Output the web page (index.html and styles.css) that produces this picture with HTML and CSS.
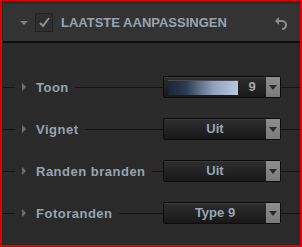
FILE: index.html
```html
<!DOCTYPE html>
<html lang="nl">
<head>
    <meta charset="UTF-8">
    <link rel="stylesheet" href="styles.css">
</head>
<body>
<div class="panel">
    <!-- Panel header -->
    <div class="header">
        <span class="caret-down"></span>
        <span class="check">
            <svg width="13" height="13" viewBox="0 0 13 13"><path d="M2 7 L5 10 L11 2" fill="none" stroke="#8f8f8f" stroke-width="2"/></svg>
        </span>
        <span class="title">LAATSTE AANPASSINGEN</span>
        <svg class="undo" width="14" height="14" viewBox="0 0 14 14"><path d="M5 1 L1 5 L5 9 Z" fill="#8a8a8a"/><path d="M3 5 H8 A4 4 0 0 1 8 13" fill="none" stroke="#8a8a8a" stroke-width="2.2"/></svg>
    </div>

    <!-- Rows -->
    <div class="rows">
        <div class="row">
            <span class="label"><span class="caret"></span>Toon</span>
            <div class="select">
                <div class="value tone"><span class="gradient"></span><span class="num">9</span></div>
                <span class="arrow"></span>
            </div>
        </div>
        <div class="row">
            <span class="label"><span class="caret"></span>Vignet</span>
            <div class="select">
                <div class="value">Uit</div>
                <span class="arrow"></span>
            </div>
        </div>
        <div class="row">
            <span class="label"><span class="caret"></span>Randen branden</span>
            <div class="select">
                <div class="value">Uit</div>
                <span class="arrow"></span>
            </div>
        </div>
        <div class="row">
            <span class="label"><span class="caret"></span>Fotoranden</span>
            <div class="select">
                <div class="value">Type 9</div>
                <span class="arrow"></span>
            </div>
        </div>
    </div>
</div>
</body>
</html>
```
FILE: styles.css
```css
html, body {
    margin: 0;
    padding: 0;
}

body {
    font-family: "Liberation Sans", Arial, sans-serif;
    font-weight: bold;
}

.panel {
    width: 302px;
    height: 247px;
    box-sizing: border-box;
    border: 2px solid #e00000;
    border-top-width: 1px;
    background-color: #2a2a2a;
}

.header {
    height: 37px;
    margin-left: 1px;
    background-color: #333333;
    border-top: 3px solid #2c2c2c;
    border-bottom: 2px solid #0d0d0d;
    display: flex;
    align-items: center;
    color: #96a4b2;
}

.caret-down {
    width: 0;
    height: 0;
    border-left: 4px solid transparent;
    border-right: 4px solid transparent;
    border-top: 4px solid #7d7d7d;
    margin-left: 17px;
    margin-right: 7px;
}

.check {
    width: 16px;
    height: 17px;
    background-color: #2e2e2e;
    border: 1px solid #232323;
    display: flex;
    align-items: center;
    justify-content: center;
    margin-right: 8px;
}

.title {
    font-size: 13px;
}

.undo {
    margin-left: auto;
    margin-right: 12px;
}

.rows {
    padding-top: 23px;
}

.row {
    height: 42px;
    display: flex;
    align-items: center;
    background: linear-gradient(#141414, #141414) no-repeat 1px 50% / 100% 1px;
}

.label {
    display: flex;
    align-items: center;
    margin-left: 13px;
    padding: 0 6px;
    background-color: #2a2a2a;
    color: #96a4b2;
    font-size: 13px;
    letter-spacing: 0.5px;
}

.caret {
    width: 0;
    height: 0;
    border-top: 4px solid transparent;
    border-bottom: 4px solid transparent;
    border-left: 4px solid #6e6e6e;
    margin-left: 1px;
    margin-right: 10px;
}

.select {
    margin-left: auto;
    margin-right: 19px;
    width: 118px;
    height: 22px;
    box-sizing: border-box;
    border: 1px solid #0c0c0c;
    border-radius: 2px;
    display: flex;
    background: linear-gradient(#2e2e2e, #181818);
    box-shadow: inset 0 1px 0 #3a3a3a;
}

.value {
    flex: 1;
    text-align: center;
    line-height: 20px;
    font-size: 13px;
    color: #97a6b4;
}

.value.tone {
    display: flex;
    align-items: center;
    padding-left: 4px;
}

.gradient {
    width: 70px;
    height: 14px;
    background: linear-gradient(to right, #1b2535, #2b3a52 25%, #8fa2bf 65%, #b9c8de);
    border-top: 1px solid #4a4a4a;
}

.num {
    flex: 1;
    text-align: center;
    color: #a4a8a8;
}

.arrow {
    width: 14px;
    background: linear-gradient(#8e8e8e, #7a7a7a);
    display: flex;
    align-items: center;
    justify-content: center;
}

.arrow::after {
    content: "";
    border-left: 4px solid transparent;
    border-right: 4px solid transparent;
    border-top: 5px solid #2a2a2a;
}
```
